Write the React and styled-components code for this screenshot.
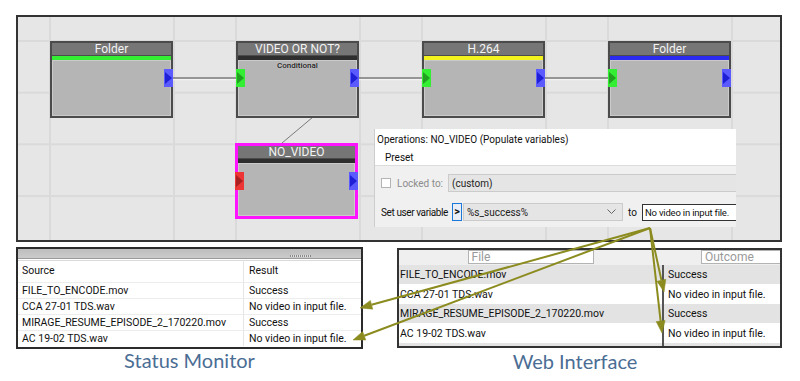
import React from "react";
import styled, { createGlobalStyle } from "styled-components";

const GlobalStyle = createGlobalStyle`
  html, body {
    margin: 0;
    padding: 0;
    background: #fff;
  }
  body {
    font-family: Roboto, "Liberation Sans", Arial, sans-serif;
    color: #111;
  }
`;

const Page = styled.div`
  position: relative;
  width: 800px;
  height: 381px;
  box-sizing: border-box;
  padding: 15px 0 0 16px;
  overflow: hidden;
`;

// ---------- workflow canvas ----------

const Canvas = styled.div`
  position: relative;
  width: 766px;
  height: 227px;
  box-sizing: border-box;
  border: 2px solid #333;
  overflow: hidden;
  background-color: #e6e6e6;
  background-image:
    linear-gradient(to right, #dadada 0 2px, transparent 2px),
    linear-gradient(to right, #dadada 0 2px, transparent 2px),
    linear-gradient(to bottom, #dadada 0 2px, transparent 2px);
  background-size: 186px 100%, 186px 100%, 100% 51.7px;
  background-position: 31px 0, 155px 0, 0 23px;
`;

const Wires = styled.svg`
  position: absolute;
  left: 0;
  top: 0;
  width: 100%;
  height: 100%;
`;

const Node = styled.div`
  position: absolute;
  left: ${(p) => p.$x}px;
  top: ${(p) => p.$y}px;
  width: 123px;
  height: ${(p) => p.$h || 77}px;
  box-sizing: border-box;
  border: ${(p) => (p.$selected ? "3px solid #ff14ff" : "2px solid #4b4b4b")};
  background: #4b4b4b;
  display: flex;
  flex-direction: column;
`;

const NodeTitle = styled.div`
  height: 12px;
  background: #767676;
  color: #f3f3f3;
  font-size: 12px;
  line-height: 12px;
  text-align: center;
  margin-bottom: 1px;
`;

const NodeBar = styled.div`
  height: 4px;
  background: ${(p) => p.$color};
`;

const NodeBody = styled.div`
  flex: 1;
  background: #b5b5b5;
  box-shadow: inset 0 0 0 1px #cacaca;
  text-align: center;
`;

const NodeKind = styled.div`
  font-size: 8px;
  font-weight: 500;
  line-height: 10px;
  padding-top: 1px;
  color: #1a1a1a;
  text-shadow: 0 0 1px #e0e0e0;
`;

const portColors = {
  out: ["#5a5aff", "#1f1fd6"],
  in: ["#33ee33", "#22a022"],
  err: ["#ee3535", "#a82020"],
};

const Port = styled.div`
  position: absolute;
  top: 26px;
  ${(p) => (p.$kind === "out" ? "right" : "left")}: ${(p) => (p.$offset ? -p.$offset : -2)}px;
  width: 9px;
  height: 18px;
  background: ${(p) => portColors[p.$kind][0]};
  display: flex;
  align-items: center;
  justify-content: center;

  &::after {
    content: "";
    width: 0;
    height: 0;
    border-top: 6px solid transparent;
    border-bottom: 6px solid transparent;
    border-left: 7px solid ${(p) => portColors[p.$kind][1]};
  }
`;

// ---------- operations panel ----------

const Panel = styled.div`
  position: absolute;
  left: 356px;
  top: 112px;
  width: 362px;
  height: 98px;
  box-sizing: border-box;
  background: #f0f0f0;
  border-left: 1px solid #cdcdcd;
  overflow: hidden;
  font-size: 10px;
`;

const PanelHead = styled.div`
  height: 37px;
  background: #fff;
  border-bottom: 1px solid #dcdcdc;
  box-sizing: border-box;
`;

const PanelTitle = styled.div`
  line-height: 22px;
  padding-left: 2px;
`;

const PanelPreset = styled.div`
  line-height: 14px;
  padding-left: 10px;
`;

const PanelRows = styled.div`
  display: flex;
  flex-direction: column;
  gap: 10px;
  padding-top: 7px;
`;

const PanelRow = styled.div`
  display: flex;
  align-items: center;
  height: ${(p) => p.$h}px;
  padding-left: 6px;
`;

const Check = styled.span`
  width: 10px;
  height: 10px;
  flex-shrink: 0;
  box-sizing: border-box;
  border: 1px solid #b4b4b4;
  background: #fff;
  margin-right: 6px;
`;

const FieldLabel = styled.span`
  width: ${(p) => p.$w}px;
  flex-shrink: 0;
  white-space: nowrap;
  letter-spacing: ${(p) => (p.$tight ? "-0.4px" : "0")};
  padding-left: ${(p) => p.$pad || 0}px;
  box-sizing: border-box;
  color: ${(p) => (p.$muted ? "#8c8c8c" : "#111")};
`;

const Combo = styled.div`
  position: relative;
  display: flex;
  align-items: center;
  height: ${(p) => p.$h || 18}px;
  width: ${(p) => p.$w}px;
  flex-shrink: 0;
  box-sizing: border-box;
  background: #e5e5e5;
  border: 1px solid #cbcbcb;
  padding-left: 3px;
  color: #222;
`;

const Chevron = styled.svg`
  position: absolute;
  right: 6px;
  top: 5px;
`;

const PickButton = styled.div`
  width: 10px;
  height: 18px;
  flex-shrink: 0;
  box-sizing: border-box;
  border: 1px solid #1c78d8;
  background: #e9eef6;
  margin-right: 1px;
  font-weight: 700;
  font-size: 11px;
  line-height: 15px;
  text-align: center;
`;

const TextField = styled.div`
  height: 17px;
  width: 110px;
  flex-shrink: 0;
  box-sizing: border-box;
  border: 1px solid #333;
  background: #fff;
  padding-left: 2px;
  font-size: 9.5px;
  letter-spacing: -0.2px;
  line-height: 15px;
  white-space: nowrap;
`;

// ---------- tables ----------

const Bottom = styled.div`
  display: flex;
  margin-top: 5px;
`;

const Column = styled.div`
  display: flex;
  flex-direction: column;
  width: ${(p) => p.$w}px;
  margin-left: ${(p) => p.$ml || 0}px;
  margin-top: ${(p) => p.$mt || 0}px;
`;

const MonitorTable = styled.div`
  height: 102px;
  box-sizing: border-box;
  border: 2px solid #2b2b2b;
  background: #fff;
  font-size: 10.5px;
`;

const GripStrip = styled.div`
  height: 9px;
  background: linear-gradient(#bdbdbd, #cbcbcb);
  border-bottom: 1px solid #9a9a9a;
  display: flex;
  justify-content: flex-end;
  align-items: flex-end;
  padding-right: 50px;
`;

const Grip = styled.div`
  width: 21px;
  height: 2px;
  margin-bottom: 1px;
  background: repeating-linear-gradient(to right, #8a8a8a 0 1px, #e0e0e0 1px 2px);
`;

const MonitorGrid = styled.div`
  display: grid;
  grid-template-columns: 225px 1fr;
  border-top: 1px solid #fff;
  box-shadow: inset 0 1px 0 #dadada;
`;

const MonitorCell = styled.div`
  height: ${(p) => (p.$head ? 22 : 16)}px;
  line-height: ${(p) => (p.$head ? 22 : 16)}px;
  padding-left: ${(p) => (p.$second ? 5 : 4)}px;
  box-sizing: border-box;
  border-top: ${(p) => (p.$head ? "none" : "1px solid #ececec")};
  border-left: ${(p) => (p.$second ? "1px solid #e6e6e6" : "none")};
  white-space: nowrap;
`;

const WebTable = styled.div`
  height: 100px;
  box-sizing: border-box;
  border: 2px solid #333;
  background: #e3e3e3;
  font-size: 10.5px;
  overflow: hidden;
  display: grid;
  grid-template-columns: 263px 1fr;
  grid-template-rows: 15px 19px 20px 19px 20px 1fr;
`;

const FilterCell = styled.div`
  background: #efefef;
  display: flex;
  justify-content: ${(p) => (p.$center ? "center" : "flex-start")};
  padding-left: ${(p) => p.$pad || 0}px;
  overflow: hidden;
`;

const Filter = styled.div`
  width: 126px;
  height: 14px;
  flex-shrink: 0;
  box-sizing: border-box;
  border: 1px solid #b3b3b3;
  background: #fff;
  color: #9a9a9a;
  font-size: 12px;
  line-height: 12px;
  padding-left: 3px;
`;

const WebCell = styled.div`
  background: ${(p) => (p.$odd ? "#e3e3e3" : "#fff")};
  padding-left: ${(p) => (p.$second ? 4 : 1)}px;
  border-left: ${(p) => (p.$second ? "2px solid #555" : "none")};
  display: flex;
  align-items: center;
  white-space: nowrap;
`;

const Caption = styled.div`
  font-family: Lato, "Open Sans", sans-serif;
  font-size: 20px;
  line-height: 21px;
  color: #4a6d94;
  text-align: center;
  margin-top: ${(p) => p.$mt}px;
  padding-right: ${(p) => p.$shift || 0}px;
`;

const Overlay = styled.svg`
  position: absolute;
  left: 0;
  top: 0;
  pointer-events: none;
`;

const rows = [
  ["FILE_TO_ENCODE.mov", "Success"],
  ["CCA 27-01 TDS.wav", "No video in input file."],
  ["MIRAGE_RESUME_EPISODE_2_170220.mov", "Success"],
  ["AC 19-02 TDS.wav", "No video in input file."],
];

const nodes = [
  { x: 32, title: "Folder", bar: "#33ee33", ports: ["out"] },
  { x: 218, title: "VIDEO OR NOT?", bar: "#2e2e2e", kind: "Conditional", ports: ["in", "out"] },
  { x: 404, title: "H.264", bar: "#f2f21c", ports: ["in", "out"] },
  { x: 590, title: "Folder", bar: "#2a2af0", ports: ["in", "out"] },
];

function arrowHead(from, to, len = 12, w = 4.5) {
  const dx = to[0] - from[0];
  const dy = to[1] - from[1];
  const d = Math.hypot(dx, dy);
  const ux = dx / d;
  const uy = dy / d;
  const bx = to[0] - ux * len;
  const by = to[1] - uy * len;
  return {
    base: [bx, by],
    points: `${to[0]},${to[1]} ${bx - uy * w},${by + ux * w} ${bx + uy * w},${by - ux * w}`,
  };
}

const origin = [650, 228];
const tips = [
  [360, 308],
  [353, 340],
  [664, 292],
  [662, 333],
];

function Arrows() {
  return (
    <Overlay width="800" height="381">
      {tips.map((t, i) => {
        const h = arrowHead(origin, t);
        return (
          <g key={i} fill="#8b8b1f" stroke="#8b8b1f">
            <line x1={origin[0]} y1={origin[1]} x2={h.base[0]} y2={h.base[1]} strokeWidth="2" />
            <polygon points={h.points} strokeWidth="0.5" />
          </g>
        );
      })}
    </Overlay>
  );
}

function FlowNode({ x, y, h, title, bar, kind, ports, selected }) {
  const off = selected ? 3 : 2;
  return (
    <Node $x={x} $y={y} $h={h} $selected={selected}>
      <NodeTitle>{title}</NodeTitle>
      <NodeBar $color={bar} />
      <NodeBody>{kind && <NodeKind>{kind}</NodeKind>}</NodeBody>
      {ports.map((p) => (
        <Port key={p} $kind={p} $offset={off} />
      ))}
    </Node>
  );
}

function OperationsPanel() {
  return (
    <Panel>
      <PanelHead>
        <PanelTitle>Operations: NO_VIDEO (Populate variables)</PanelTitle>
        <PanelPreset>Preset</PanelPreset>
      </PanelHead>
      <PanelRows>
        <PanelRow $h={20}>
          <Check />
          <FieldLabel $w={51} $muted>
            Locked to:
          </FieldLabel>
          <Combo $w={300} $h={18}>(custom)</Combo>
        </PanelRow>
        <PanelRow $h={18}>
          <FieldLabel $w={71} $tight>
            Set user variable
          </FieldLabel>
          <PickButton>&gt;</PickButton>
          <Combo $w={160}>
            %s_success%
            <Chevron width="9" height="6" viewBox="0 0 9 6">
              <polyline points="0.5,0.5 4.5,4.5 8.5,0.5" fill="none" stroke="#666" strokeWidth="1" />
            </Chevron>
          </Combo>
          <FieldLabel $w={19} $pad={5}>
            to
          </FieldLabel>
          <TextField>No video in input file.</TextField>
        </PanelRow>
      </PanelRows>
    </Panel>
  );
}

export default function App() {
  return (
    <Page>
      <GlobalStyle />
      <Canvas>
        <Wires>
          <g stroke="#7a7a7a" strokeWidth="1.5">
            <line x1="155" y1="61" x2="218" y2="61" />
            <line x1="341" y1="61" x2="404" y2="61" />
            <line x1="527" y1="61" x2="590" y2="61" />
            <line x1="295" y1="100" x2="264" y2="126" strokeWidth="1" />
          </g>
          <g stroke="#f6f6f6" strokeWidth="1">
            <line x1="155" y1="62.7" x2="218" y2="62.7" />
            <line x1="341" y1="62.7" x2="404" y2="62.7" />
            <line x1="527" y1="62.7" x2="590" y2="62.7" />
          </g>
        </Wires>
        {nodes.map((n) => (
          <FlowNode key={n.x} y={24} {...n} />
        ))}
        <FlowNode
          x={217}
          y={126}
          h={76}
          title="NO_VIDEO"
          bar="#2e2e2e"
          ports={["err", "out"]}
          selected
        />
        <OperationsPanel />
      </Canvas>

      <Bottom>
        <Column $w={347}>
          <MonitorTable>
            <GripStrip>
              <Grip />
            </GripStrip>
            <MonitorGrid>
              <MonitorCell $head>Source</MonitorCell>
              <MonitorCell $head $second>
                Result
              </MonitorCell>
              {rows.map(([file, result]) => (
                <React.Fragment key={file}>
                  <MonitorCell>{file}</MonitorCell>
                  <MonitorCell $second>{result}</MonitorCell>
                </React.Fragment>
              ))}
            </MonitorGrid>
          </MonitorTable>
          <Caption $mt={1}>Status Monitor</Caption>
        </Column>

        <Column $w={385} $ml={34} $mt={1}>
          <WebTable>
            <FilterCell $center>
              <Filter>File</Filter>
            </FilterCell>
            <FilterCell $pad={39}>
              <Filter>Outcome</Filter>
            </FilterCell>
            {rows.map(([file, result], i) => (
              <React.Fragment key={file}>
                <WebCell $odd={i % 2 === 0}>{file}</WebCell>
                <WebCell $odd={i % 2 === 0} $second>
                  {result}
                </WebCell>
              </React.Fragment>
            ))}
            <WebCell $odd />
            <WebCell $odd $second />
          </WebTable>
          <Caption $mt={3} $shift={29}>
            Web Interface
          </Caption>
        </Column>
      </Bottom>

      <Arrows />
    </Page>
  );
}
